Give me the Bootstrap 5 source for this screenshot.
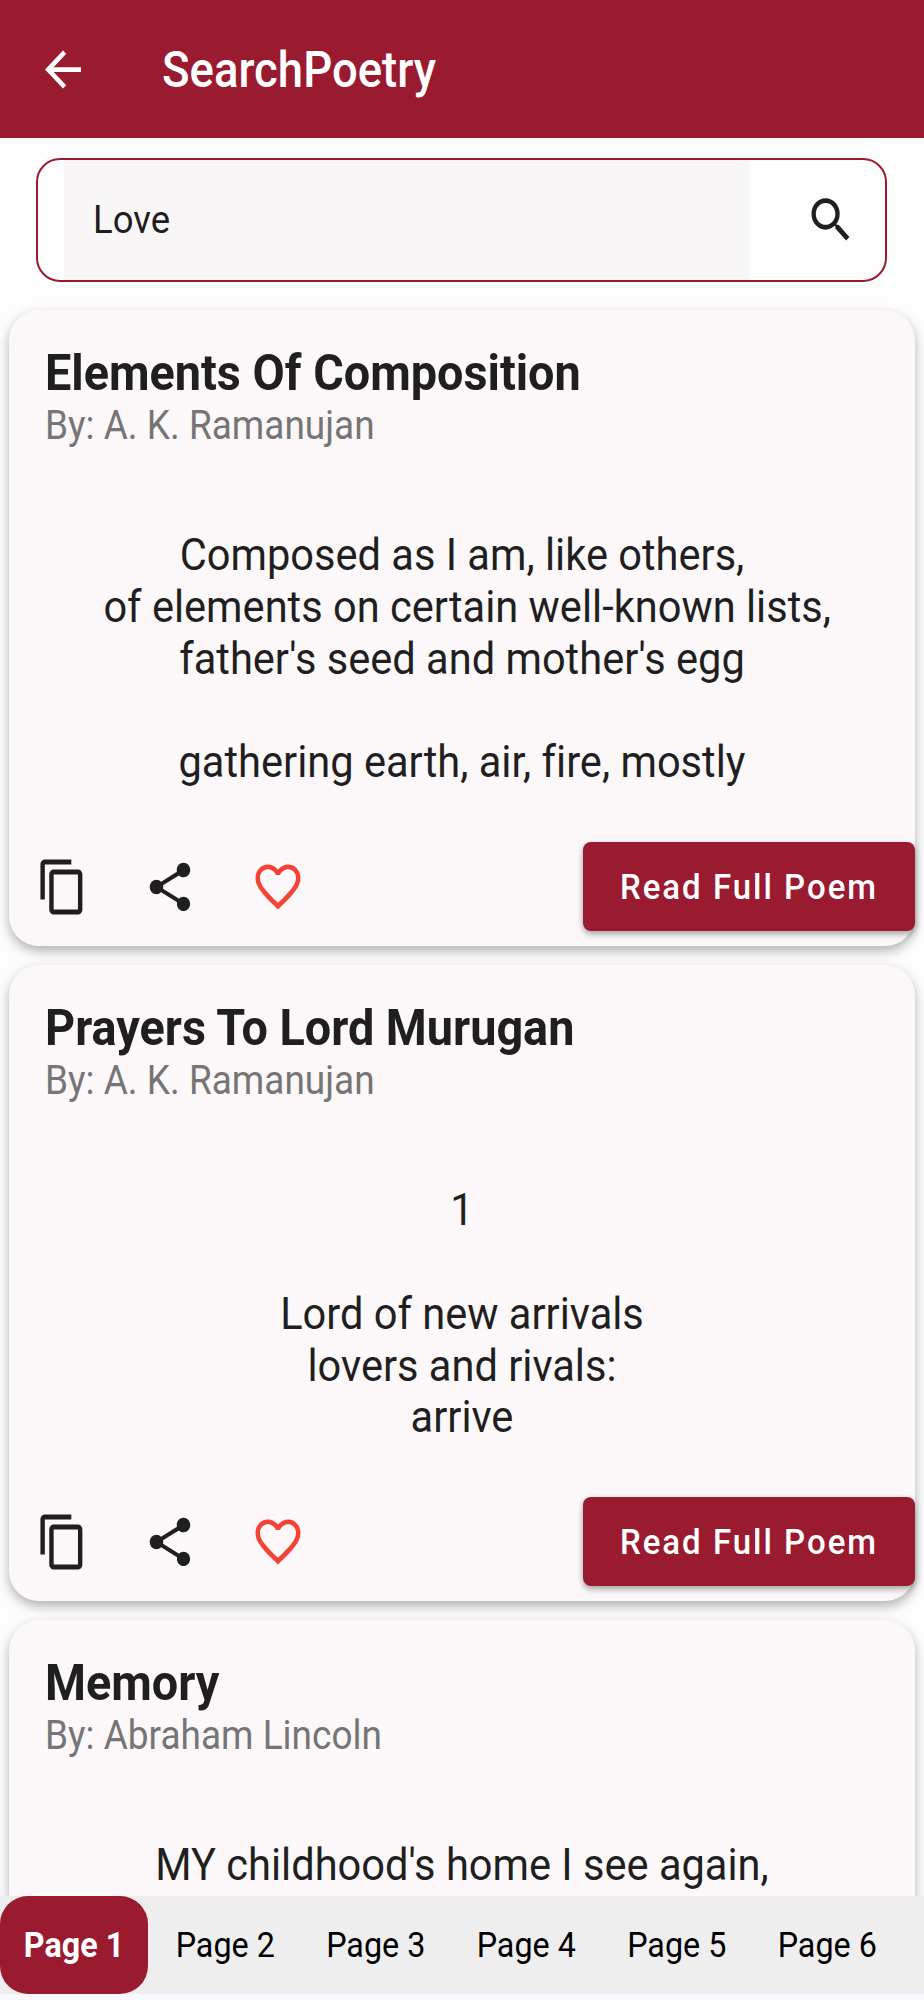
<!DOCTYPE html>
<html lang="en"><head><meta charset="utf-8"><title>SearchPoetry</title>
<link href="https://cdn.jsdelivr.net/npm/bootstrap@5.3.0/dist/css/bootstrap.min.css" rel="stylesheet">
<style>
html,body{margin:0;background:#fefdfe;font-family:Roboto,"Liberation Sans",sans-serif;color:#1f1f1f;font-variant-ligatures:none}
.shell{height:2000px;overflow:hidden;background:#f8f8ff}
.tall{display:inline-block;transform:scaleY(1.08)}
.topbar{height:138px;background:#9a1b30;color:#fff;flex:none;padding-left:36px}
.topbar h1{font-size:45.5px;font-weight:500;margin:0 0 0 72px;padding-top:4px;line-height:1;transform:scaleY(1.08)}
.main{flex:1 1 0;min-height:0;overflow:hidden;background:#fefdfe}
.searchbox{margin:20px 37px 0 36px;height:124px;border:2px solid #9a1b30;border-radius:24px;background:#fefdfe;padding-left:26px;overflow:hidden}
.searchfill{width:686px;height:100%;background:#f8f6f7;padding-left:29px;font-size:36.5px;color:#1f1f1f}
.searchbtn{flex:1;padding-left:26px}
.poem{margin:28px 9px 0;height:636px;background:#fcf8fa;border-radius:30px;box-shadow:0 5px 12px rgba(0,0,0,.3);padding:36px 0 0;flex:none}
.poem + .poem{margin-top:19px}
.poem-title{font-size:46.8px;font-weight:700;line-height:54px;margin:0 0 0 36px;color:#1f1f1f;transform:scaleY(1.08);transform-origin:left center}
.poem-by{font-size:37px;line-height:42px;color:#757575;margin:5px 0 0 36px;transform:scaleY(1.08);transform-origin:left center}
.poem-text{font-size:41.6px;line-height:48px;text-align:center;margin-top:82px;height:260px;color:#1f1f1f;transform:scaleY(1.08);transform-origin:center top}
.poem-foot{margin-top:53px;padding-left:27px;height:89px}
.acts{gap:54px}
.readbtn{width:332px;height:89px;background:#9a1b30;color:#fff;border:0;border-radius:8px;font-size:33px;font-weight:500;letter-spacing:2px;box-shadow:0 3px 6px rgba(0,0,0,.35);padding:0}
.readbtn:hover{background:#9a1b30;color:#fff}
.pager{height:98px;background:#eeeeee;flex:none;margin-bottom:6px}
.pg{width:150.5px;text-align:center;font-size:32.3px;color:#000;line-height:98px}
.pg-on{width:148px;margin-right:2px;background:#9a1b30;color:#fff;font-weight:700;border-radius:28px}
</style></head>
<body>
<div class="shell d-flex flex-column">
 <header class="topbar d-flex align-items-center">
  <svg width="54" height="57" viewBox="0 0 24 24" preserveAspectRatio="none" fill="#fff"><path d="M20 11H7.83l5.59-5.59L12 4l-8 8 8 8 1.41-1.41L7.83 13H20v-2z"/></svg>
  <h1>SearchPoetry</h1>
 </header>
 <main class="main">
  <div class="searchbox d-flex">
   <div class="searchfill d-flex align-items-center"><span class="tall">Love</span></div>
   <div class="searchbtn d-flex align-items-center justify-content-center">
    <svg width="52" height="58" viewBox="0 0 24 24" preserveAspectRatio="none" fill="#1f1f1f"><path d="M15.5 14h-.79l-.28-.27A6.47 6.47 0 0 0 16 9.5 6.5 6.5 0 1 0 9.5 16c1.61 0 3.09-.59 4.23-1.57l.27.28v.79l5 4.99L20.49 19l-4.99-5zm-6 0C7.01 14 5 11.99 5 9.5S7.01 5 9.5 5 14 7.01 14 9.5 11.99 14 9.5 14z"/></svg>
   </div>
  </div>

  <article class="poem">
   <h2 class="poem-title">Elements Of Composition</h2>
   <div class="poem-by">By: A. K. Ramanujan</div>
   <div class="poem-text">Composed as I am, like others,<br>&nbsp;of elements on certain well-known lists,<br>father's seed and mother's egg<br><br>gathering earth, air, fire, mostly</div>
   <div class="poem-foot d-flex align-items-center justify-content-between">
    <div class="acts d-flex align-items-center">
     <svg width="53" height="60" viewBox="0 0 24 24" preserveAspectRatio="none" fill="#1f1f1f"><path d="M16 1H4c-1.1 0-2 .9-2 2v14h2V3h12V1zm3 4H8c-1.1 0-2 .9-2 2v14c0 1.1.9 2 2 2h11c1.1 0 2-.9 2-2V7c0-1.1-.9-2-2-2zm0 16H8V7h11v14z"/></svg>
     <svg width="54" height="58" viewBox="0 0 24 24" preserveAspectRatio="none" fill="#1f1f1f"><path d="M18 16.08c-.76 0-1.44.3-1.96.77L8.91 12.7c.05-.23.09-.46.09-.7s-.04-.47-.09-.7l7.05-4.11c.54.5 1.25.81 2.04.81 1.66 0 3-1.34 3-3s-1.34-3-3-3-3 1.34-3 3c0 .24.04.47.09.7L8.04 9.81C7.5 9.31 6.79 9 6 9c-1.66 0-3 1.34-3 3s1.34 3 3 3c.79 0 1.5-.31 2.04-.81l7.12 4.16c-.05.21-.08.43-.08.65 0 1.61 1.31 2.92 2.92 2.92s2.92-1.31 2.92-2.92-1.31-2.92-2.92-2.92z"/></svg>
     <svg width="54" height="59" viewBox="0 0 24 24" preserveAspectRatio="none" fill="#f44336"><path d="M16.5 3c-1.74 0-3.41.81-4.5 2.09C10.91 3.81 9.24 3 7.5 3 4.42 3 2 5.42 2 8.5c0 3.78 3.4 6.86 8.55 11.54L12 21.35l1.45-1.32C18.6 15.36 22 12.28 22 8.5 22 5.42 19.58 3 16.5 3zm-4.4 15.55l-.1.1-.1-.1C7.14 14.24 4 11.39 4 8.5 4 6.5 5.5 5 7.5 5c1.54 0 3.04.99 3.57 2.36h1.87C13.46 5.99 14.96 5 16.5 5c2 0 3.5 1.5 3.5 3.5 0 2.89-3.14 5.74-7.9 10.05z"/></svg>
    </div>
    <button class="readbtn btn" type="button"><span class="tall">Read Full Poem</span></button>
   </div>
  </article>

  <article class="poem">
   <h2 class="poem-title">Prayers To Lord Murugan</h2>
   <div class="poem-by">By: A. K. Ramanujan</div>
   <div class="poem-text">1<br><br>Lord of new arrivals<br>lovers and rivals:<br>arrive</div>
   <div class="poem-foot d-flex align-items-center justify-content-between">
    <div class="acts d-flex align-items-center">
     <svg width="53" height="60" viewBox="0 0 24 24" preserveAspectRatio="none" fill="#1f1f1f"><path d="M16 1H4c-1.1 0-2 .9-2 2v14h2V3h12V1zm3 4H8c-1.1 0-2 .9-2 2v14c0 1.1.9 2 2 2h11c1.1 0 2-.9 2-2V7c0-1.1-.9-2-2-2zm0 16H8V7h11v14z"/></svg>
     <svg width="54" height="58" viewBox="0 0 24 24" preserveAspectRatio="none" fill="#1f1f1f"><path d="M18 16.08c-.76 0-1.44.3-1.96.77L8.91 12.7c.05-.23.09-.46.09-.7s-.04-.47-.09-.7l7.05-4.11c.54.5 1.25.81 2.04.81 1.66 0 3-1.34 3-3s-1.34-3-3-3-3 1.34-3 3c0 .24.04.47.09.7L8.04 9.81C7.5 9.31 6.79 9 6 9c-1.66 0-3 1.34-3 3s1.34 3 3 3c.79 0 1.5-.31 2.04-.81l7.12 4.16c-.05.21-.08.43-.08.65 0 1.61 1.31 2.92 2.92 2.92s2.92-1.31 2.92-2.92-1.31-2.92-2.92-2.92z"/></svg>
     <svg width="54" height="59" viewBox="0 0 24 24" preserveAspectRatio="none" fill="#f44336"><path d="M16.5 3c-1.74 0-3.41.81-4.5 2.09C10.91 3.81 9.24 3 7.5 3 4.42 3 2 5.42 2 8.5c0 3.78 3.4 6.86 8.55 11.54L12 21.35l1.45-1.32C18.6 15.36 22 12.28 22 8.5 22 5.42 19.58 3 16.5 3zm-4.4 15.55l-.1.1-.1-.1C7.14 14.24 4 11.39 4 8.5 4 6.5 5.5 5 7.5 5c1.54 0 3.04.99 3.57 2.36h1.87C13.46 5.99 14.96 5 16.5 5c2 0 3.5 1.5 3.5 3.5 0 2.89-3.14 5.74-7.9 10.05z"/></svg>
    </div>
    <button class="readbtn btn" type="button"><span class="tall">Read Full Poem</span></button>
   </div>
  </article>

  <article class="poem">
   <h2 class="poem-title">Memory</h2>
   <div class="poem-by">By: Abraham Lincoln</div>
   <div class="poem-text">MY childhood's home I see again,</div>
  </article>
 </main>
 <nav class="pager d-flex">
  <div class="pg pg-on"><span class="tall">Page 1</span></div><div class="pg"><span class="tall">Page 2</span></div><div class="pg"><span class="tall">Page 3</span></div><div class="pg"><span class="tall">Page 4</span></div><div class="pg"><span class="tall">Page 5</span></div><div class="pg"><span class="tall">Page 6</span></div>
 </nav>
</div>
<script src="https://cdn.jsdelivr.net/npm/bootstrap@5.3.0/dist/js/bootstrap.bundle.min.js"></script>
</body></html>
